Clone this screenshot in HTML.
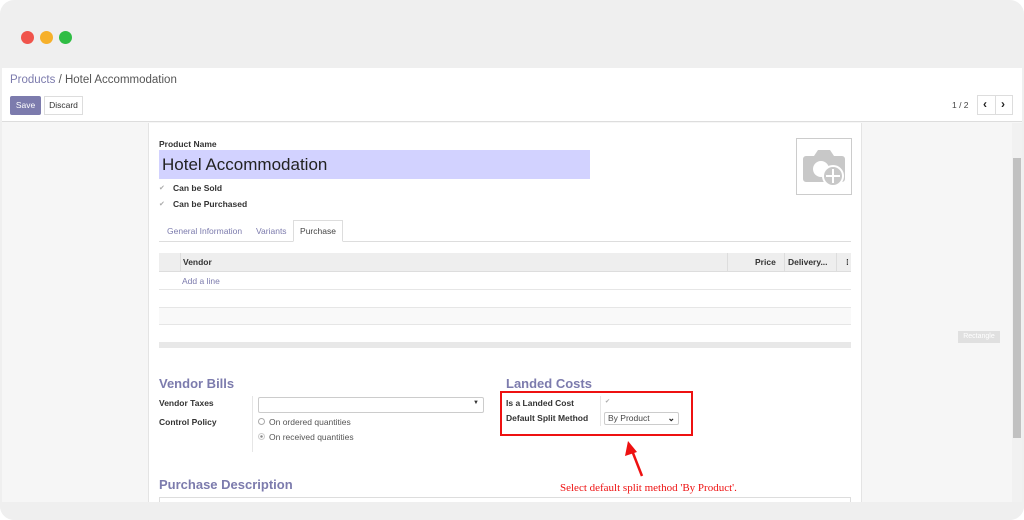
<!DOCTYPE html>
<html><head><meta charset="utf-8"><style>
*{margin:0;padding:0;box-sizing:border-box}
body{width:1024px;height:520px;background:#fff;font-family:"Liberation Sans",sans-serif;position:relative;overflow:hidden;color:#4c4c4c}
.a{position:absolute}
.frame{left:0;top:0;width:1024px;height:520px;background:#efefef;border-radius:14px}
.dot{width:13px;height:13px;border-radius:50%;top:31px}
.lbl{font-size:8.5px;font-weight:bold;color:#333}
.sm{font-size:8.5px;color:#555}
.h{font-size:13px;font-weight:bold;color:#7c7bad}
</style></head><body>
<div class="a frame"></div>
<div class="a dot" style="left:21px;background:#f0544c"></div>
<div class="a dot" style="left:40px;background:#f6b02a"></div>
<div class="a dot" style="left:59px;background:#2fbd44"></div>
<div class="a" style="left:2px;top:68px;width:1020px;height:434px;background:#f6f6f6;border-top:1px solid #ddd"></div>
<div class="a" style="left:2px;top:68px;width:1020px;height:54px;background:#fff;border-bottom:1px solid #ddd"></div>
<div class="a" style="left:10px;top:74px;font-size:11.5px;color:#555"><span style="color:#7c7bad">Products</span> / Hotel Accommodation</div>
<div class="a" style="left:10px;top:96px;width:31px;height:19px;background:#7c7bad;color:#fff;font-size:8.5px;line-height:19px;text-align:center;border-radius:2px">Save</div>
<div class="a" style="left:44px;top:96px;width:39px;height:19px;border:1px solid #ddd;color:#333;font-size:8.5px;line-height:17px;text-align:center;background:#fff">Discard</div>
<div class="a sm" style="left:952px;top:100px;color:#444">1 / 2</div>
<div class="a" style="left:977px;top:95px;width:36px;height:20px;border:1px solid #ddd;background:#fff;font-size:12px;font-weight:bold;color:#222;line-height:17px"><span style="position:absolute;left:5px">‹</span><span style="position:absolute;left:23px">›</span><span style="position:absolute;left:17px;top:0;width:1px;height:18px;background:#ddd"></span></div>
<div class="a" style="left:148px;top:123px;width:714px;height:379px;background:#fff;border-left:1px solid #e4e4e4;border-right:1px solid #e4e4e4"></div>
<div class="a" style="left:1012px;top:123px;width:10px;height:379px;background:#f1f1f1"></div>
<div class="a" style="left:1013px;top:158px;width:8px;height:280px;background:#c1c1c1"></div>
<div class="a" style="left:958px;top:331px;width:42px;height:12px;background:#e0e0e0;color:#fff;font-size:7px;text-align:center;line-height:12px">Rectangle</div>
<div class="a lbl" style="left:159px;top:139px">Product Name</div>
<div class="a" style="left:159px;top:150px;width:431px;height:29px;background:#d2d2ff;font-size:17px;color:#222;padding:5px 3px">Hotel Accommodation</div>
<div class="a" style="left:796px;top:138px;width:56px;height:57px;border:1px solid #ccc;background:#fff">
<svg width="54" height="55" viewBox="0 0 54 55"><path d="M9 17h8l4-6h12l4 6h8a3 3 0 0 1 3 3v20a3 3 0 0 1-3 3H9a3 3 0 0 1-3-3V20a3 3 0 0 1 3-3z" fill="#c8c8c8"/><circle cx="24" cy="30" r="8" fill="#fff"/><circle cx="36" cy="37" r="10" fill="#c8c8c8" stroke="#fff" stroke-width="2"/><path d="M36 30v14M29 37h14" stroke="#fff" stroke-width="2"/></svg></div>
<div class="a" style="left:159px;top:184px;font-size:7px;color:#aaa">✔</div>
<div class="a lbl" style="left:173px;top:183px">Can be Sold</div>
<div class="a" style="left:159px;top:200px;font-size:7px;color:#aaa">✔</div>
<div class="a lbl" style="left:173px;top:199px">Can be Purchased</div>
<div class="a" style="left:159px;top:241px;width:692px;height:1px;background:#ddd"></div>
<div class="a sm" style="left:167px;top:226px;color:#7c7bad">General Information</div>
<div class="a sm" style="left:256px;top:226px;color:#7c7bad">Variants</div>
<div class="a" style="left:293px;top:220px;width:50px;height:22px;border:1px solid #ddd;border-bottom:1px solid #fff;background:#fff;font-size:8.5px;color:#444;text-align:center;line-height:21px">Purchase</div>
<div class="a" style="left:159px;top:253px;width:692px;height:19px;background:#eee;border-bottom:1px solid #ddd"></div>
<div class="a" style="left:180px;top:253px;width:1px;height:19px;background:#ddd"></div>
<div class="a" style="left:727px;top:253px;width:1px;height:19px;background:#ddd"></div>
<div class="a" style="left:784px;top:253px;width:1px;height:19px;background:#ddd"></div>
<div class="a" style="left:836px;top:253px;width:1px;height:19px;background:#ddd"></div>
<div class="a lbl" style="left:183px;top:257px">Vendor</div>
<div class="a lbl" style="left:755px;top:257px">Price</div>
<div class="a lbl" style="left:788px;top:257px">Delivery...</div>
<div class="a lbl" style="left:846px;top:257px">⁞</div>
<div class="a sm" style="left:182px;top:276px;color:#7c7bad">Add a line</div>
<div class="a" style="left:159px;top:289px;width:692px;height:1px;background:#e6e6e6"></div>
<div class="a" style="left:159px;top:307px;width:692px;height:18px;background:#f9f9f9;border-top:1px solid #e6e6e6;border-bottom:1px solid #e6e6e6"></div>
<div class="a" style="left:159px;top:342px;width:692px;height:6px;background:#e8e8e8"></div>
<div class="a h" style="left:159px;top:376px">Vendor Bills</div>
<div class="a lbl" style="left:159px;top:398px">Vendor Taxes</div>
<div class="a lbl" style="left:159px;top:417px">Control Policy</div>
<div class="a" style="left:252px;top:396px;width:1px;height:56px;background:#e6e6e6"></div>
<div class="a" style="left:258px;top:397px;width:226px;height:16px;border:1px solid #ccc;border-radius:2px"><span style="position:absolute;right:4px;top:2px;font-size:6px;color:#333">▼</span></div>
<div class="a" style="left:258px;top:418px;width:7px;height:7px;border:1px solid #aaa;border-radius:50%"></div>
<div class="a sm" style="left:269px;top:417px">On ordered quantities</div>
<div class="a" style="left:258px;top:433px;width:7px;height:7px;border:1px solid #ccc;border-radius:50%;background:radial-gradient(#888 30%,#fff 40%)"></div>
<div class="a sm" style="left:269px;top:432px">On received quantities</div>
<div class="a h" style="left:506px;top:376px">Landed Costs</div>
<div class="a" style="left:500px;top:391px;width:193px;height:45px;border:2px solid #ee1111"></div>
<div class="a lbl" style="left:506px;top:398px">Is a Landed Cost</div>
<div class="a lbl" style="left:506px;top:413px">Default Split Method</div>
<div class="a" style="left:600px;top:396px;width:1px;height:30px;background:#e6e6e6"></div>
<div class="a" style="left:605px;top:398px;font-size:6px;color:#aaa">✔</div>
<div class="a" style="left:604px;top:412px;width:75px;height:13px;border:1px solid #ccc;border-radius:2px;font-size:8.5px;color:#444;padding-left:3px;line-height:11px">By Product<span style="position:absolute;right:3px;top:0;font-size:9px;font-weight:bold;color:#222">⌄</span></div>
<svg class="a" style="left:622px;top:438px" width="24" height="42"><path d="M20 38 L9 10" stroke="#ee1111" stroke-width="2.5"/><path d="M6 3 L3 18 L15 14Z" fill="#ee1111"/></svg>
<div class="a" style="left:560px;top:482px;font-family:'Liberation Serif',serif;font-size:11px;color:#ee1111">Select default split method 'By Product'.</div>
<div class="a h" style="left:159px;top:477px">Purchase Description</div>
<div class="a" style="left:159px;top:497px;width:692px;height:6px;border:1px solid #ddd;border-bottom:none"></div>
<div class="a" style="left:0;top:502px;width:1024px;height:18px;background:#efefef;border-radius:0 0 14px 14px"></div>
</body></html>
